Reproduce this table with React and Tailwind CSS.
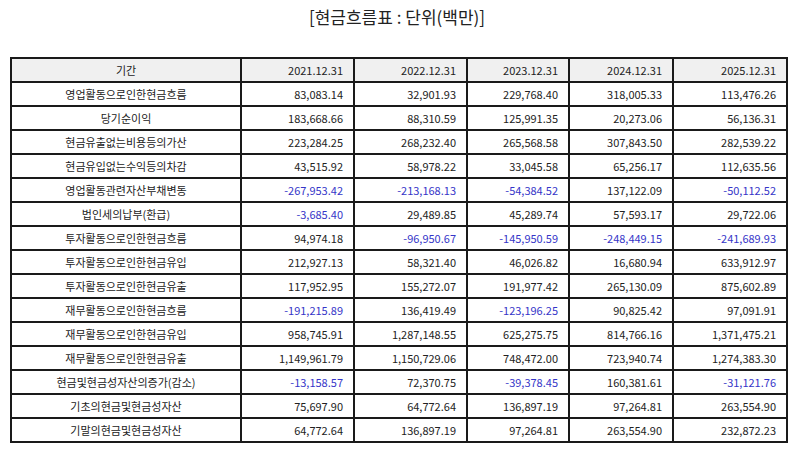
import React from "react";

const headers = ["기간", "2021.12.31", "2022.12.31", "2023.12.31", "2024.12.31", "2025.12.31"];
const rows = [
  ["영업활동으로인한현금흐름", "83,083.14", "32,901.93", "229,768.40", "318,005.33", "113,476.26"],
  ["당기순이익", "183,668.66", "88,310.59", "125,991.35", "20,273.06", "56,136.31"],
  ["현금유출없는비용등의가산", "223,284.25", "268,232.40", "265,568.58", "307,843.50", "282,539.22"],
  ["현금유입없는수익등의차감", "43,515.92", "58,978.22", "33,045.58", "65,256.17", "112,635.56"],
  ["영업활동관련자산부채변동", "-267,953.42", "-213,168.13", "-54,384.52", "137,122.09", "-50,112.52"],
  ["법인세의납부(환급)", "-3,685.40", "29,489.85", "45,289.74", "57,593.17", "29,722.06"],
  ["투자활동으로인한현금흐름", "94,974.18", "-96,950.67", "-145,950.59", "-248,449.15", "-241,689.93"],
  ["투자활동으로인한현금유입", "212,927.13", "58,321.40", "46,026.82", "16,680.94", "633,912.97"],
  ["투자활동으로인한현금유출", "117,952.95", "155,272.07", "191,977.42", "265,130.09", "875,602.89"],
  ["재무활동으로인한현금흐름", "-191,215.89", "136,419.49", "-123,196.25", "90,825.42", "97,091.91"],
  ["재무활동으로인한현금유입", "958,745.91", "1,287,148.55", "625,275.75", "814,766.16", "1,371,475.21"],
  ["재무활동으로인한현금유출", "1,149,961.79", "1,150,729.06", "748,472.00", "723,940.74", "1,274,383.30"],
  ["현금및현금성자산의증가(감소)", "-13,158.57", "72,370.75", "-39,378.45", "160,381.61", "-31,121.76"],
  ["기초의현금및현금성자산", "75,697.90", "64,772.64", "136,897.19", "97,264.81", "263,554.90"],
  ["기말의현금및현금성자산", "64,772.64", "136,897.19", "97,264.81", "263,554.90", "232,872.23"],
];

export default function App() {
  return (
    <div
      className="w-[794px] h-[452px] bg-white text-[#222]"
      style={{ fontFamily: '"Noto Sans CJK KR", "Noto Sans", sans-serif' }}
    >
      <div className="pt-[5px] h-[57px] text-center text-[17px] leading-[24px] text-[#222]">
        [현금흐름표 : 단위(백만)]
      </div>
      <table className="ml-[10px] w-[776px] table-fixed border-collapse text-[11px]">
        <colgroup>
          <col className="w-[230px]" />
          <col className="w-[113px]" />
          <col className="w-[113px]" />
          <col className="w-[102px]" />
          <col className="w-[104px]" />
          <col className="w-[114px]" />
        </colgroup>
        <thead>
          <tr className="h-[24px] bg-[#f0f0f0]">
            {headers.map((h, i) => (
              <th
                key={i}
                className={`border-2 border-[#1a1a1a] font-normal p-0 leading-[20px] ${
                  i === 0 ? "text-center" : "text-right pr-[10px]"
                }`}
              >
                {h}
              </th>
            ))}
          </tr>
        </thead>
        <tbody>
          {rows.map((r, ri) => (
            <tr key={ri} className="h-[24px]">
              {r.map((c, ci) => (
                <td
                  key={ci}
                  className={`border-2 border-[#1a1a1a] p-0 leading-[20px] ${
                    ci === 0 ? "text-center" : "text-right pr-[10px]"
                  } ${ci > 0 && c.startsWith("-") ? "text-[#3535c8]" : ""}`}
                >
                  {c}
                </td>
              ))}
            </tr>
          ))}
        </tbody>
      </table>
    </div>
  );
}
